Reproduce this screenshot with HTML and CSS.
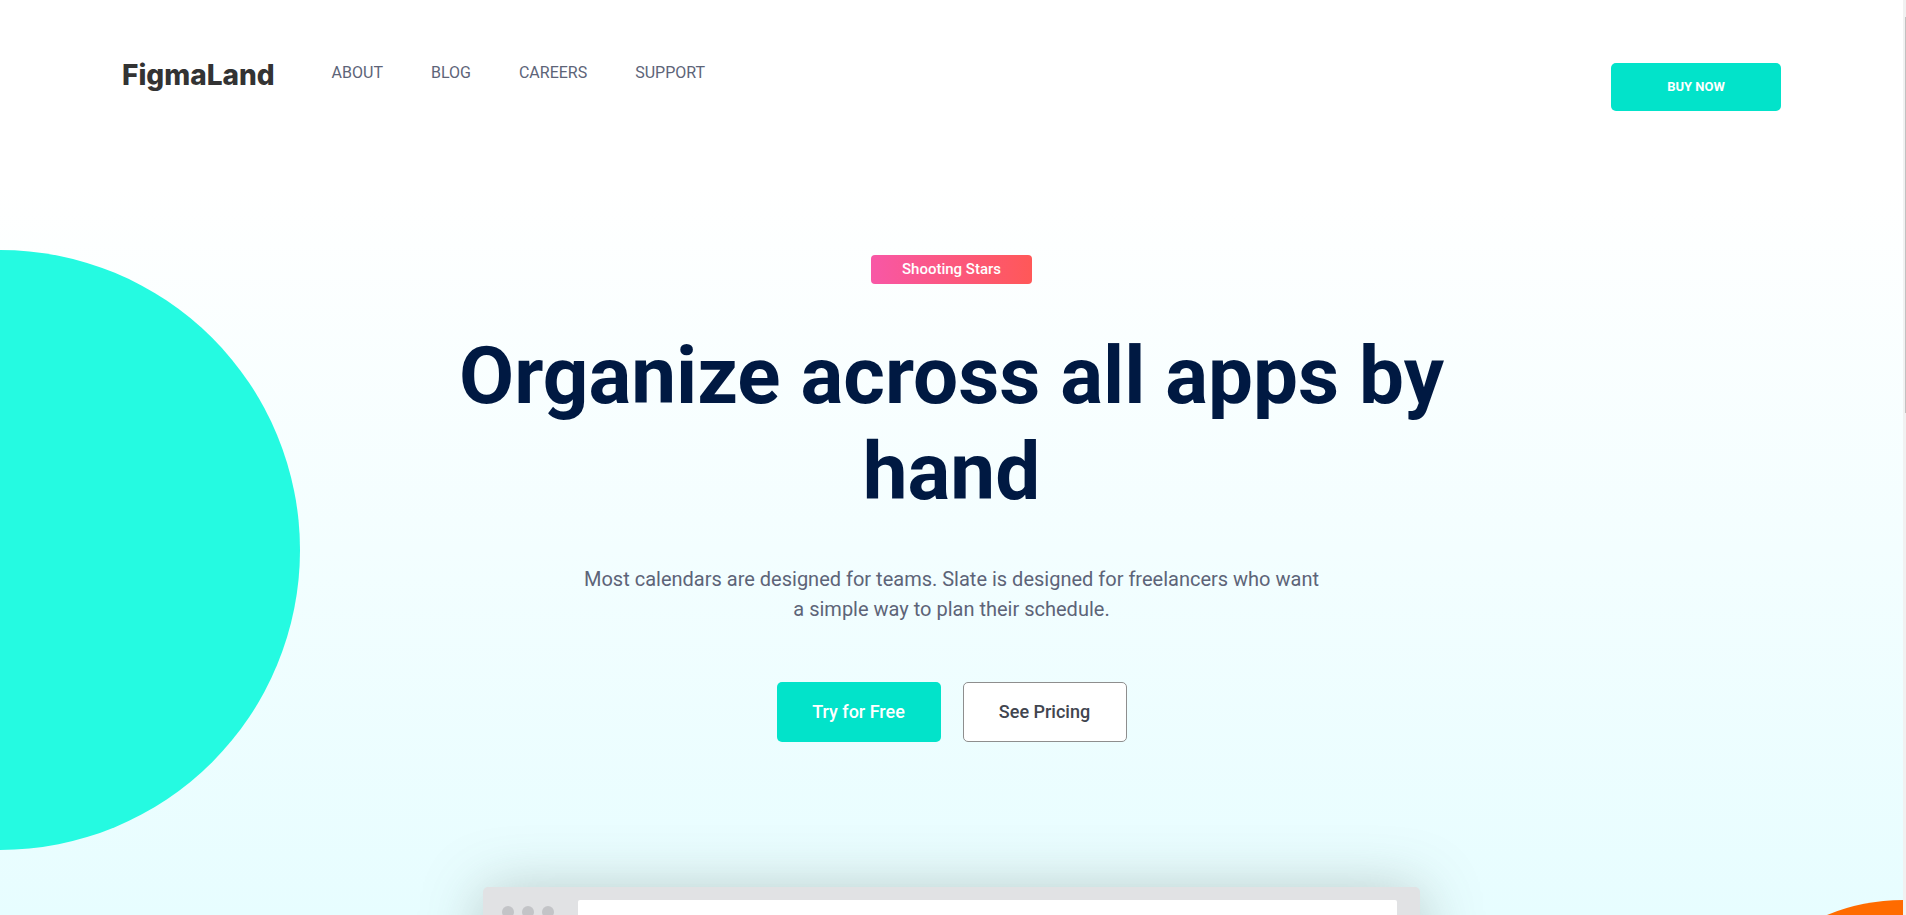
FILE: index.html
```html
<!DOCTYPE html>
<html lang="en">
<head>
<meta charset="utf-8">
<meta name="viewport" content="width=device-width, initial-scale=1">
<title>FigmaLand</title>
<link rel="stylesheet" href="styles.css">
</head>
<body>
<div class="page">
  <div class="circle circle-teal"></div>
  <div class="circle circle-orange"></div>
  <header class="header">
    <a class="logo" href="#">FigmaLand</a>
    <nav class="nav">
      <a href="#about">ABOUT</a>
      <a href="#blog">BLOG</a>
      <a href="#careers">CAREERS</a>
      <a href="#support">SUPPORT</a>
    </nav>
    <button class="button button-small" type="button">BUY NOW</button>
  </header>
  <main class="hero">
    <span class="badge">Shooting Stars</span>
    <h1 class="title">Organize across all apps by hand</h1>
    <p class="lead">Most calendars are designed for teams. Slate is designed for freelancers who want a simple way to plan their schedule.</p>
    <div class="actions">
      <button class="button" type="button">Try for Free</button>
      <button class="button button-outline" type="button">See Pricing</button>
    </div>
    <div class="browser">
      <div class="dots"><span></span><span></span><span></span></div>
      <div class="screen"></div>
    </div>
  </main>
</div>
<div class="scrollbar" aria-hidden="true"><div class="thumb"></div></div>
</body>
</html>
```

FILE: styles.css
```css
* {
  box-sizing: border-box;
}

body {
  margin: 0;
  display: flex;
  height: 100vh;
  overflow: hidden;
  font-family: Roboto, "Liberation Sans", sans-serif;
}

.page {
  position: relative;
  flex: 1;
  overflow: hidden;
  background: linear-gradient(#fff 20%, #e7fdff 100%);
}

.circle {
  position: absolute;
  border-radius: 50%;
}

.circle-teal {
  top: 250px;
  left: -300px;
  width: 600px;
  height: 600px;
  background: #25fae1;
}

.circle-orange {
  top: 900px;
  right: -200px;
  width: 400px;
  height: 400px;
  background: #ff6b00;
}

.header {
  position: relative;
  display: flex;
  align-items: flex-start;
  padding: 63px 122px 0;
}

.logo {
  margin-right: 57px;
  color: #333;
  font: 800 28px/24px Inter, sans-serif;
  text-decoration: none;
}

.nav {
  display: flex;
  gap: 48px;
}

.nav a {
  color: #5d6478;
  font-size: 16px;
  line-height: 20px;
  text-decoration: none;
}

.button {
  width: 164px;
  height: 60px;
  border: 0;
  border-radius: 5px;
  background: #02e3ca;
  color: #fff;
  font: 500 18px/24px Roboto, "Liberation Sans", sans-serif;
}

.button-small {
  width: 170px;
  height: 48px;
  margin-left: auto;
  font-size: 13px;
  font-weight: 700;
}

.button-outline {
  border: 1px solid #8e8e8e;
  background: #fff;
  color: #41454f;
}

.hero {
  position: relative;
  display: flex;
  flex-direction: column;
  align-items: center;
  padding-top: 144px;
  text-align: center;
}

.badge {
  padding: 0 31px;
  border-radius: 4px;
  background: linear-gradient(90deg, #f857a6, #ff5858);
  color: #fff;
  font-size: 15px;
  font-weight: 500;
  line-height: 29px;
}

.title {
  max-width: 1000px;
  margin: 44px 0 0;
  color: #001942;
  font-size: 80px;
  font-weight: 700;
  line-height: 96px;
}

.lead {
  max-width: 740px;
  margin: 44px 0 0;
  color: #5d6478;
  font-size: 20px;
  line-height: 30px;
}

.actions {
  display: flex;
  gap: 22px;
  margin-top: 58px;
}

.browser {
  display: flex;
  width: 937px;
  max-width: 90%;
  height: 600px;
  margin-top: 145px;
  padding: 13px 23px 23px 19px;
  border-radius: 5px;
  background: #e1e2e4;
  box-shadow: 0 4px 60px rgba(90, 100, 90, 0.35);
}

.dots {
  display: flex;
  gap: 8px;
  width: 76px;
  padding-top: 6px;
}

.dots span {
  width: 12px;
  height: 12px;
  border-radius: 50%;
  background: #c3c4c7;
}

.screen {
  flex: 1;
  border-radius: 2px;
  background: #fff;
}

.scrollbar {
  width: 3px;
  padding: 17px 0 0 2px;
  background: #f1f1f1;
}

.thumb {
  height: 396px;
  background: #c1c1c1;
}
```
